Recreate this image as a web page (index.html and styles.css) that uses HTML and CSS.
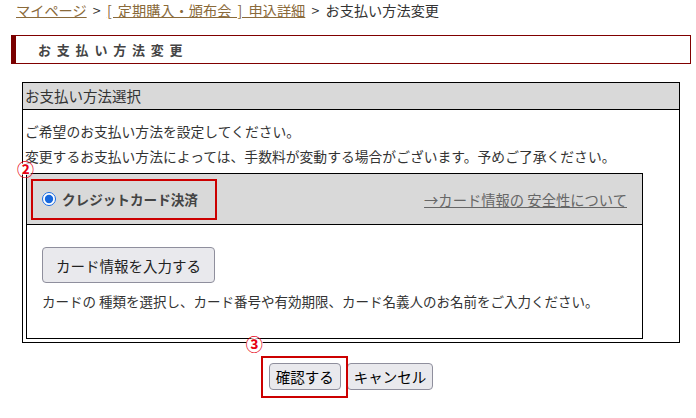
FILE: index.html
```html
<!DOCTYPE html>
<html lang="ja">
<head>
  <meta charset="UTF-8">
  <meta name="viewport" content="width=device-width, initial-scale=1.0">
  <title>お支払い方法変更</title>
  <link rel="stylesheet" href="styles.css">
</head>
<body>
  <div class="crumbs">
    <a href="#">マイページ</a> &gt; <a href="#">[ 定期購入・頒布会 ] 申込詳細</a> &gt; お支払い方法変更
  </div>

  <h1 class="page-title">お支払い方法変更</h1>

  <div class="panel">
    <div class="panel-head">お支払い方法選択</div>
    <div class="panel-body">
      <p class="lead">ご希望のお支払い方法を設定してください。</p>
      <p class="lead">変更するお支払い方法によっては、手数料が変動する場合がございます。予めご了承ください。</p>
      <span class="mark mark-2">②</span>

      <div class="method">
        <div class="method-head">
          <label class="method-choice"><input type="radio" name="payment" checked>クレジットカード決済</label>
          <a class="method-link" href="#">→カード情報の 安全性について</a>
        </div>
        <div class="method-body">
          <button type="button" class="btn btn-card">カード情報を入力する</button>
          <p class="note">カードの 種類を選択し、カード番号や有効期限、カード名義人のお名前をご入力ください。</p>
        </div>
      </div>
    </div>
  </div>

  <div class="actions">
    <span class="focus">
      <span class="mark mark-3">③</span>
      <button type="button" class="btn">確認する</button>
    </span>
    <button type="button" class="btn">キャンセル</button>
  </div>
</body>
</html>
```

FILE: styles.css
```css
body {
  margin: 0;
  font-family: "Noto Sans CJK JP", "Noto Sans", sans-serif;
  color: #333;
}

.crumbs {
  height: 20px;
  padding-left: 16px;
  font-size: 14.2px;
  line-height: 20px;
  word-spacing: 3px;
  color: #333;
}

.crumbs a {
  color: #8a6a3a;
}

.page-title {
  box-sizing: border-box;
  height: 29px;
  margin: 15px 5px 0 11px;
  padding-left: 22px;
  border: 1px solid #800000;
  border-left: 5px solid #7a0000;
  font-size: 13px;
  font-weight: bold;
  line-height: 27px;
  letter-spacing: 5.8px;
  color: #444;
}

.panel {
  box-sizing: border-box;
  width: 658px;
  margin: 18px 0 0 22px;
  border: 1px solid #000;
}

.panel-head {
  height: 26px;
  padding-left: 2px;
  border-bottom: 1px solid #000;
  background-color: #d9d9d9;
  font-size: 14.5px;
  line-height: 26px;
}

.panel-body {
  position: relative;
  padding: 14px 0 3px 0;
}

.lead {
  margin: 0 0 11px 0;
  padding-left: 2px;
  font-size: 13.8px;
  line-height: 14px;
}

.lead + .lead {
  margin-bottom: 0;
}

.mark {
  position: absolute;
  width: 17px;
  height: 12px;
  border-radius: 50%;
  background-color: #fff;
  color: #e60012;
  font-size: 17px;
  font-weight: bold;
  line-height: 12px;
  text-align: center;
}

.mark-2 {
  left: -6px;
  top: 53px;
}

.method {
  box-sizing: border-box;
  width: 617px;
  margin: 10px 0 0 3px;
  border: 1px solid #000;
}

.method-head {
  display: flex;
  align-items: center;
  justify-content: space-between;
  height: 50px;
  padding: 0 15px 0 4px;
  border-bottom: 1px solid #000;
  background-color: #d9d9d9;
}

.method-choice {
  box-sizing: border-box;
  display: flex;
  align-items: center;
  width: 186px;
  height: 41px;
  padding-left: 9px;
  border: 2px solid #cc0000;
  font-size: 13.6px;
  font-weight: bold;
  color: #444;
}

.method-choice input {
  width: 14px;
  height: 14px;
  margin: 0 6px 0 0;
  accent-color: #1767dd;
}

.method-link {
  font-size: 14.3px;
  color: #666;
}

.method-body {
  padding: 22px 15px 27px 15px;
}

.btn {
  box-sizing: border-box;
  height: 27px;
  padding: 0 6px;
  border: 1px solid #8f8f9d;
  border-radius: 4px;
  background-color: #e9e9ed;
  font-family: inherit;
  font-size: 14.5px;
  color: #000;
  cursor: pointer;
}

.btn-card {
  height: 36px;
  padding: 0 13px;
  color: #222;
}

.note {
  margin: 8px 0 0 0;
  font-size: 13.5px;
  line-height: 20px;
}

.actions {
  display: flex;
  justify-content: center;
  gap: 6px;
  width: 658px;
  margin-left: 22px;
  padding: 20px 0 28px 0;
}

.focus {
  position: relative;
  display: inline-block;
}

.focus::after {
  content: "";
  position: absolute;
  top: -7px;
  left: -8px;
  right: -7px;
  bottom: -8px;
  border: 2px solid #cc0000;
}

.mark-3 {
  left: -23px;
  top: -25px;
}
```
